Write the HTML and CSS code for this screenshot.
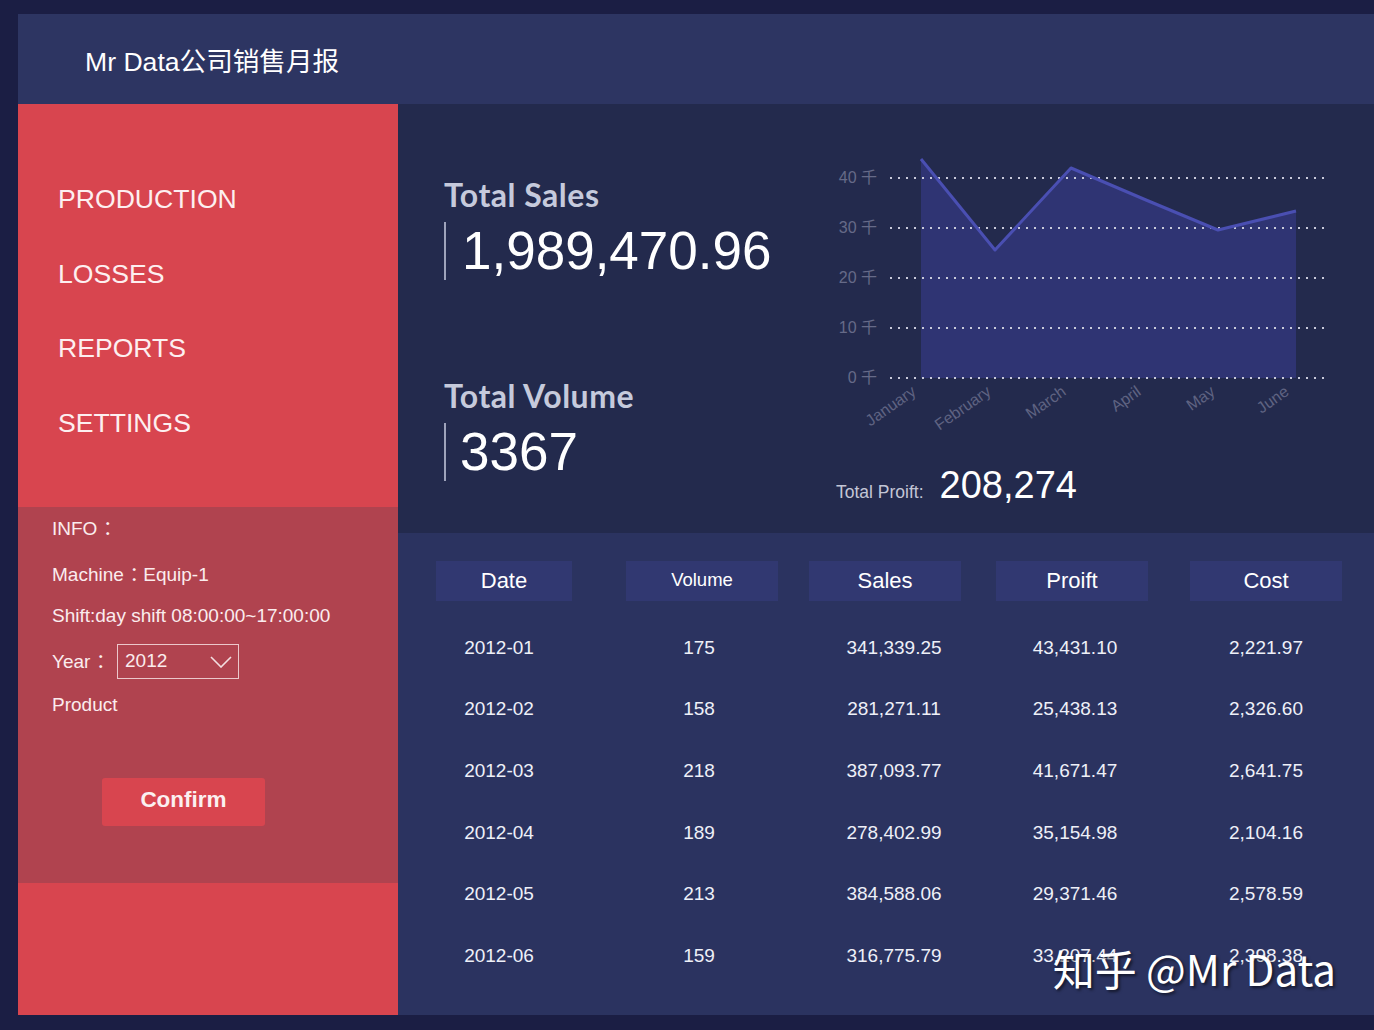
FILE: index.html
```html
<!DOCTYPE html>
<html lang="zh">
<head>
<meta charset="utf-8">
<title>Mr Data公司销售月报</title>
<link rel="stylesheet" href="styles.css">
</head>
<body>
<div class="app">
  <header class="topbar">
    <h1 class="title">Mr Data公司销售月报</h1>
  </header>
  <div class="body-row">
    <aside class="sidebar">
      <nav class="nav">
        <div class="nav-item">PRODUCTION</div>
        <div class="nav-item">LOSSES</div>
        <div class="nav-item">REPORTS</div>
        <div class="nav-item">SETTINGS</div>
      </nav>
      <section class="info">
        <div class="info-line info-head">INFO<span class="colon">：</span></div>
        <div class="info-line info-machine">Machine<span class="colon">：</span>Equip-1</div>
        <div class="info-line info-shift">Shift:day shift 08:00:00~17:00:00</div>
        <div class="info-line info-year">
          <span class="year-label">Year<span class="colon">：</span></span>
          <div class="select">
            <span class="select-value">2012</span>
            <svg class="chev" width="22" height="12" viewBox="0 0 22 12"><path d="M1 1 L11 11 L21 1" fill="none" stroke="#f3dfe1" stroke-width="1.6"/></svg>
          </div>
        </div>
        <div class="info-line info-product">Product</div>
        <button class="confirm">Confirm</button>
      </section>
      <div class="side-bottom"></div>
    </aside>
    <main class="main">
      <section class="kpis">
        <div class="kpi-left">
          <div class="kpi">
            <div class="kpi-label">Total Sales</div>
            <div class="kpi-value">1,989,470.96</div>
          </div>
          <div class="kpi kpi-second">
            <div class="kpi-label">Total Volume</div>
            <div class="kpi-value">3367</div>
          </div>
        </div>
        <div class="kpi-right">
          <svg class="chart" width="554" height="300" viewBox="0 0 554 300">
            <polygon class="area" points="101,19 175,110 251,28 326,60 398,90 476,71 476,238 101,238"/>
            <g class="grid">
              <line x1="70" y1="38" x2="505" y2="38"/>
              <line x1="70" y1="88" x2="505" y2="88"/>
              <line x1="70" y1="138" x2="505" y2="138"/>
              <line x1="70" y1="188" x2="505" y2="188"/>
              <line x1="70" y1="238" x2="505" y2="238"/>
            </g>
            <polyline class="line" points="101,19 175,110 251,28 326,60 398,90 476,71"/>
            <g class="ylab">
              <text x="57" y="43">40 千</text>
              <text x="57" y="93">30 千</text>
              <text x="57" y="143">20 千</text>
              <text x="57" y="193">10 千</text>
              <text x="57" y="243">0 千</text>
            </g>
            <g class="xlab">
              <text transform="translate(97 254) rotate(-35)">January</text>
              <text transform="translate(172 254) rotate(-35)">February</text>
              <text transform="translate(247 254) rotate(-35)">March</text>
              <text transform="translate(322 254) rotate(-35)">April</text>
              <text transform="translate(396 254) rotate(-35)">May</text>
              <text transform="translate(470 254) rotate(-35)">June</text>
            </g>
          </svg>
          <div class="profit">
            <span class="profit-label">Total Proift:</span>
            <span class="profit-value">208,274</span>
          </div>
        </div>
      </section>
      <section class="table-area">
        <div class="trow thead">
          <div class="cell c1"><span class="hcell">Date</span></div>
          <div class="cell c2"><span class="hcell small">Volume</span></div>
          <div class="cell c3"><span class="hcell">Sales</span></div>
          <div class="cell c4"><span class="hcell">Proift</span></div>
          <div class="cell c5"><span class="hcell">Cost</span></div>
        </div>
        <div class="tbody">
          <div class="trow drow"><div class="cell c1 d1">2012-01</div><div class="cell c2 d2">175</div><div class="cell c3 d3">341,339.25</div><div class="cell c4 d4">43,431.10</div><div class="cell c5">2,221.97</div></div>
          <div class="trow drow"><div class="cell c1 d1">2012-02</div><div class="cell c2 d2">158</div><div class="cell c3 d3">281,271.11</div><div class="cell c4 d4">25,438.13</div><div class="cell c5">2,326.60</div></div>
          <div class="trow drow"><div class="cell c1 d1">2012-03</div><div class="cell c2 d2">218</div><div class="cell c3 d3">387,093.77</div><div class="cell c4 d4">41,671.47</div><div class="cell c5">2,641.75</div></div>
          <div class="trow drow"><div class="cell c1 d1">2012-04</div><div class="cell c2 d2">189</div><div class="cell c3 d3">278,402.99</div><div class="cell c4 d4">35,154.98</div><div class="cell c5">2,104.16</div></div>
          <div class="trow drow"><div class="cell c1 d1">2012-05</div><div class="cell c2 d2">213</div><div class="cell c3 d3">384,588.06</div><div class="cell c4 d4">29,371.46</div><div class="cell c5">2,578.59</div></div>
          <div class="trow drow"><div class="cell c1 d1">2012-06</div><div class="cell c2 d2">159</div><div class="cell c3 d3">316,775.79</div><div class="cell c4 d4">33,207.44</div><div class="cell c5">2,398.38</div></div>
        </div>
        <div class="watermark">知乎 @Mr Data</div>
      </section>
    </main>
  </div>
</div>
</body>
</html>
```

FILE: styles.css
```css
* { box-sizing: border-box; }
html, body { margin: 0; padding: 0; }
body {
  background: #1b1e44;
  font-family: "Liberation Sans", Arial, "Noto Sans CJK SC", sans-serif;
  width: 1374px;
  height: 1030px;
  overflow: hidden;
}
.app {
  padding: 14px 0 0 18px;
}
.topbar {
  height: 90px;
  background: #2d3562;
  display: flex;
  align-items: center;
  padding-left: 67px;
}
.title {
  margin: 0;
  font-weight: normal;
  font-size: 26.6px;
  color: #ffffff;
  font-family: "Liberation Sans", "Noto Sans CJK SC", sans-serif;
}
.body-row {
  display: flex;
  height: 911px;
}
.sidebar {
  width: 380px;
  display: flex;
  flex-direction: column;
  background: #d8454f;
}
.nav {
  height: 403px;
  padding-top: 58px;
  padding-left: 40px;
}
.nav-item {
  height: 74.5px;
  line-height: 74px;
  font-size: 26.6px;
  color: #fdeff0;
}
.info {
  height: 376px;
  background: #b0434f;
  padding: 9px 0 0 34px;
  display: flex;
  flex-direction: column;
  align-items: flex-start;
}
.info-line {
  font-size: 19px;
  line-height: 22px;
  height: 22px;
  color: #fbecee;
  white-space: nowrap;
}
.colon {
  font-family: "Noto Sans CJK SC", sans-serif;
  padding-left: 0.3em;
  letter-spacing: -0.28em;
}
.info-machine { margin-top: 24px; }
.info-shift { margin-top: 21px; }
.info-year {
  margin-top: 17px;
  display: flex;
  align-items: center;
  height: 34px;
}
.year-label { width: 65px; }
.select {
  width: 122px;
  height: 35px;
  border: 1.5px solid #ecc7cb;
  display: flex;
  align-items: center;
  justify-content: space-between;
  padding: 0 6px 0 7px;
}
.select-value { font-size: 19px; color: #fbecee; }
.chev { display: block; margin-top: 2px; }
.info-product { margin-top: 16px; }
.confirm {
  margin-top: 62px;
  margin-left: 50px;
  width: 163px;
  height: 48px;
  border: none;
  border-radius: 3px;
  background: #d8454f;
  color: #fbf0f1;
  font-family: "Liberation Sans", Arial, sans-serif;
  font-weight: bold;
  font-size: 22.5px;
  padding: 0 0 4px 0;
}
.side-bottom {
  flex: 1;
  background: #d8454f;
}
.main {
  width: 976px;
  display: flex;
  flex-direction: column;
}
.kpis {
  height: 429px;
  background: #232a4d;
  display: flex;
}
.kpi-left {
  width: 422px;
  padding: 73px 0 0 46px;
}
.kpi-label {
  font-family: "Lato", "Noto Sans", sans-serif;
  font-weight: 700;
  font-size: 32px;
  line-height: 36px;
  color: #c6cadc;
  letter-spacing: 0.5px;
}
.kpi-value {
  margin-top: 9px;
  height: 58px;
  line-height: 58px;
  border-left: 2px solid #9ea3bb;
  padding-left: 16px;
  font-size: 53px;
  color: #ffffff;
}
.kpi-second { margin-top: 98px; }
.kpi-second .kpi-value { padding-left: 14px; }
.kpi-right {
  flex: 1;
  padding-top: 36px;
  display: flex;
  flex-direction: column;
}
.chart { display: block; }
.grid line {
  stroke: #c9cbdb;
  stroke-width: 2;
  stroke-dasharray: 2 6;
}
.ylab text {
  fill: #666a88;
  font-size: 16px;
  text-anchor: end;
  font-family: "Liberation Sans", "Noto Sans CJK SC", sans-serif;
}
.area { fill: #2f3473; }
.line { fill: none; stroke: #4a4fb2; stroke-width: 3; stroke-linejoin: round; }
.xlab text {
  fill: #5f6382;
  font-size: 16px;
  text-anchor: end;
  font-family: "Liberation Sans", sans-serif;
}
.profit {
  margin-top: 24px;
  padding-left: 16px;
  display: flex;
  align-items: baseline;
  gap: 16px;
}
.profit-label {
  font-size: 17.5px;
  color: #c3c6d6;
}
.profit-value {
  font-size: 38px;
  color: #ffffff;
}
.table-area {
  position: relative;
  height: 482px;
  background: #2b3360;
  padding-top: 28px;
  padding-left: 38px;
}
.trow {
  display: flex;
}
.cell {
  text-align: center;
}
.c1 { width: 136px; }
.c2 { width: 152px; margin-left: 54px; }
.c3 { width: 152px; margin-left: 31px; }
.c4 { width: 152px; margin-left: 35px; }
.c5 { width: 152px; margin-left: 42px; }
.thead .cell {
  height: 40px;
  background: #313871;
  display: flex;
  align-items: center;
  justify-content: center;
}
.hcell {
  font-size: 22px;
  color: #ffffff;
}
.hcell.small { font-size: 18.5px; margin-top: -3px; }
.tbody { padding-top: 16px; }
.drow {
  height: 61.6px;
  align-items: center;
}
.drow .cell {
  font-size: 19px;
  color: #eef0f8;
}
.drow .d1 { padding-right: 10px; }
.drow .d2 { padding-right: 6px; }
.drow .d3 { padding-left: 18px; }
.drow .d4 { padding-left: 6px; }
.watermark {
  position: absolute;
  right: 38px;
  bottom: 26px;
  font-family: "Noto Sans CJK SC", "Noto Sans", sans-serif;
  font-size: 42px;
  color: #ffffff;
  text-shadow: 2px 2px 3px rgba(0, 0, 0, 0.55);
  line-height: 1;
}
```
